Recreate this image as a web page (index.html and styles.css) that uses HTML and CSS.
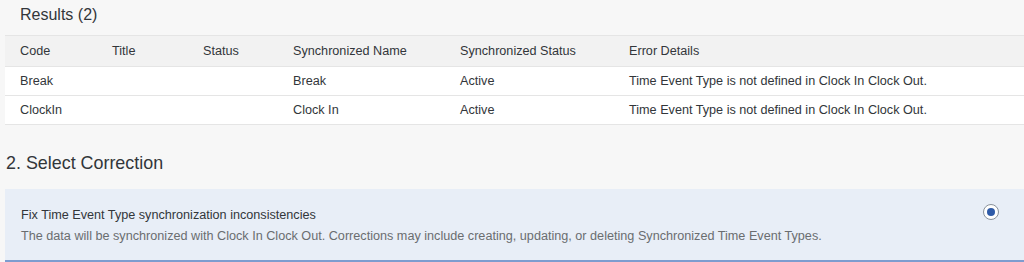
FILE: index.html
```html
<!DOCTYPE html>
<html lang="en">
  <head>
    <meta charset="UTF-8" />
    <title>Select Correction</title>
    <link rel="stylesheet" href="styles.css">
  </head>
  <body>
    <section class="results">
      <h2 class="results-title">Results (2)</h2>
      <table class="results-table">
        <thead>
          <tr>
            <th class="col-code">Code</th>
            <th class="col-title">Title</th>
            <th class="col-status">Status</th>
            <th class="col-sname">Synchronized Name</th>
            <th class="col-sstatus">Synchronized Status</th>
            <th>Error Details</th>
          </tr>
        </thead>
        <tbody>
          <tr>
            <td>Break</td>
            <td></td>
            <td></td>
            <td>Break</td>
            <td>Active</td>
            <td>Time Event Type is not defined in Clock In Clock Out.</td>
          </tr>
          <tr>
            <td>ClockIn</td>
            <td></td>
            <td></td>
            <td>Clock In</td>
            <td>Active</td>
            <td>Time Event Type is not defined in Clock In Clock Out.</td>
          </tr>
        </tbody>
      </table>
    </section>

    <section class="correction">
      <h2 class="step-title">2. Select Correction</h2>
      <div class="option selected">
        <div class="option-text">
          <div class="option-label">Fix Time Event Type synchronization inconsistencies</div>
          <div class="option-desc">The data will be synchronized with Clock In Clock Out. Corrections may include creating, updating, or deleting Synchronized Time Event Types.</div>
        </div>
        <span class="radio"><span class="radio-dot"></span></span>
      </div>
    </section>
  </body>
</html>
```

FILE: styles.css
```css
body {
  margin: 0;
  padding: 0;
  background-color: #f7f7f7;
  font-family: "Liberation Sans", Arial, sans-serif;
  color: #32363a;
  font-size: 12.65px;
}

.results {
  padding-left: 5px;
}

.results-title {
  margin: 0;
  padding: 4px 0 0 15px;
  height: 31px;
  font-size: 16px;
  font-weight: 400;
  line-height: 22px;
}

.results-table {
  width: 100%;
  border-collapse: collapse;
  background-color: #fff;
}

.results-table th,
.results-table td {
  text-align: left;
  padding: 0 0 0 15px;
  font-weight: 400;
  border-bottom: 1px solid #e5e5e5;
}

.results-table th {
  background-color: #f2f2f2;
  height: 30px;
  border-top: 1px solid #e5e5e5;
}

.results-table td {
  height: 28px;
}

.col-code { width: 77px; }
.col-title { width: 76px; }
.col-status { width: 75px; }
.col-sname { width: 152px; }
.col-sstatus { width: 154px; }

.correction {
  padding: 26px 0 0 5px;
}

.step-title {
  margin: 0 0 0 1px;
  font-size: 17.9px;
  font-weight: 400;
  line-height: 24px;
  height: 38px;
}

.option {
  display: flex;
  align-items: flex-start;
  justify-content: space-between;
  background-color: #e8eef7;
  border-bottom: 2px solid #7d9ccf;
  padding: 16px 25px 13px 16px;
}

.option-label {
  line-height: 20px;
}

.option-desc {
  color: #6a6d70;
  line-height: 22px;
}

.radio {
  width: 14px;
  height: 14px;
  border: 1px solid #89919a;
  border-radius: 50%;
  background-color: #fff;
  display: flex;
  align-items: center;
  justify-content: center;
  margin-top: -1px;
}

.radio-dot {
  width: 8px;
  height: 8px;
  border-radius: 50%;
  background-color: #2f5ba8;
}
```
